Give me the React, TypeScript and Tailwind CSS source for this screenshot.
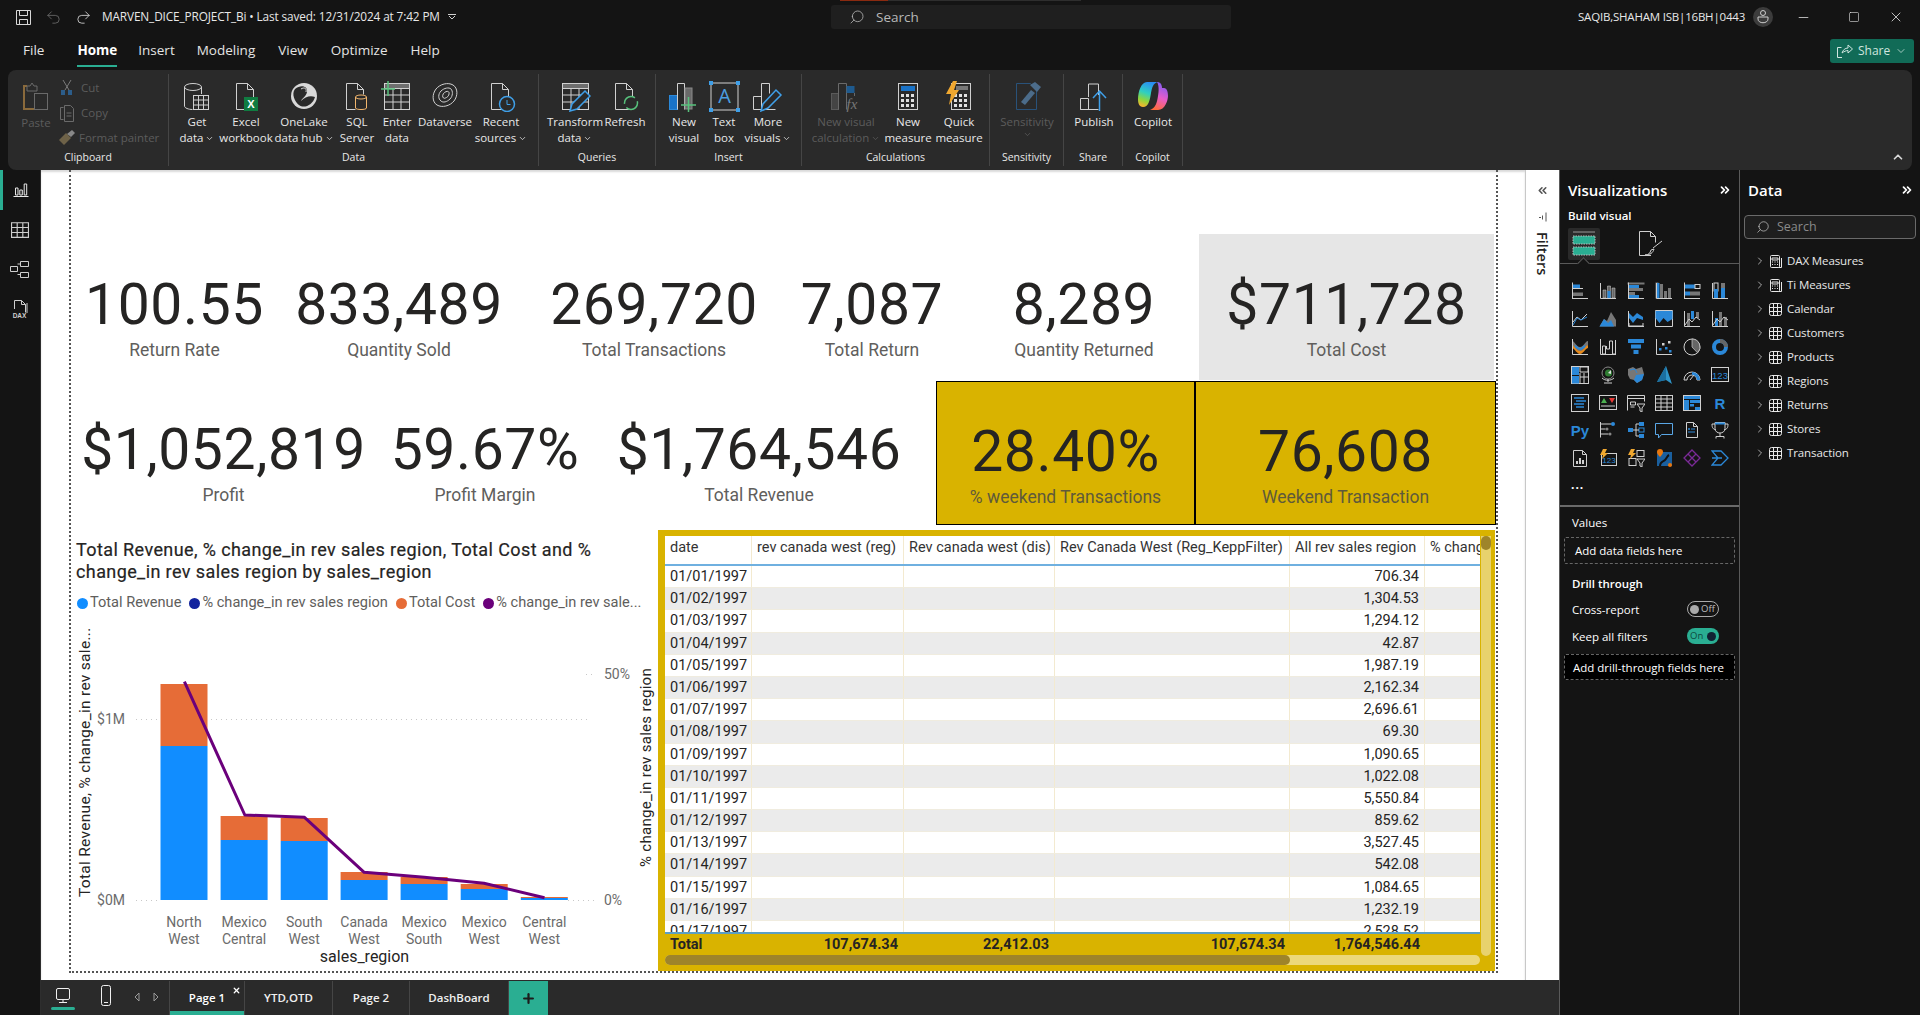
import { ReactNode } from "react";
import { ChevronDown, ChevronRight, ChevronsLeft, ChevronsRight, ChevronUp, Minus, Plus, Redo2, Search, Square, Undo2, X } from "lucide-react";

const G = "#d0d0d0";
const B = "#2b88d8";

function Ico({ children, w = 32, h = 32, className = "" }: { children: ReactNode; w?: number; h?: number; className?: string }) {
  return (
    <svg width={w} height={h} viewBox={`0 0 ${w} ${h}`} fill="none" stroke={G} strokeWidth="1" className={className}>
      {children}
    </svg>
  );
}

const doc = <path d="M6.5 3.5h11l6 6v20h-17z M17.5 3.5v6h6" />;
const calcKeys = (x: number, y: number) =>
  [0, 1, 2].flatMap((r) => [0, 1, 2].map((c) => <rect key={`${r}${c}`} x={x + c * 5} y={y + r * 5} width="3" height="3" fill="#e0e0e0" stroke="none" />));

// ribbon icons
const ribbonIcons: Record<string, ReactNode> = {
  paste: (
    <Ico>
      <path d="M7 6h-3v23h11" stroke="#8a6a3c" strokeWidth="2" />
      <path d="M7 6h3l2-3 2 3h3v5h-10z" stroke="#6a6a6a" />
      <rect x="14.500" y="13.500" width="13" height="16" stroke="#6a6a6a" />
    </Ico>
  ),
  getData: (
    <Ico>
      <ellipse cx="12" cy="7" rx="8.500" ry="3.500" />
      <path d="M3.500 7v19c0 2 4 3.500 8 3.500M20.500 7v7" />
      <rect x="12.500" y="15.500" width="15" height="14" fill="#2a2a2a" />
      <path d="M12.500 20h15M12.500 25h15M17.500 15.500v14M22.500 15.500v14" />
    </Ico>
  ),
  excel: (
    <Ico>
      {doc}
      <rect x="14" y="17" width="14" height="14" fill="#107c41" stroke="none" />
      <text x="21" y="28" fontSize="11" fontWeight="700" fill="#fff" stroke="none" textAnchor="middle" fontFamily="Liberation Sans">X</text>
    </Ico>
  ),
  onelake: (
    <Ico>
      <circle cx="16" cy="16" r="13" fill="#d8d8d8" stroke="none" />
      <path d="M7 9c6-5 13-3 12 3-1 5-5 6-6 9 4-4 9-6 14-4-2 8-11 12-16 8-4-3-8-11-4-16z" fill="#2a2a2a" stroke="none" />
      <path d="M13 9c3-2 6-1 5 3" stroke="#d8d8d8" />
    </Ico>
  ),
  sql: (
    <Ico>
      <path d="M5.500 3.500h11l6 6v5M16.500 3.500v6h6M5.500 3.500v26h9" />
      <ellipse cx="20" cy="17" rx="5.500" ry="2" stroke="#f2b66d" />
      <path d="M14.500 17v11c0 2 11 2 11 0v-11" stroke="#f2b66d" />
    </Ico>
  ),
  enter: (
    <Ico>
      <rect x="3.500" y="3.500" width="25" height="26" />
      <rect x="3.500" y="3.500" width="25" height="5" fill="#6e6e6e" />
      <path d="M3.500 15h25M3.500 22h25M12 8v21M20 8v21" />
      <path d="M0 9h14M7 1v15" stroke="#58c27d" strokeWidth="1.500" />
    </Ico>
  ),
  dataverse: (
    <Ico>
      <path d="M8 25c-5-3-5-11-1-16s12-7 17-4 5 11 1 16-12 7-17 4z" />
      <path d="M12 21c-3-2-3-7 0-10s8-4 10-2 2 7-1 10-7 4-9 2z" />
      <path d="M14.500 18c-1.500-1-1-4 1-5.500s4-1.500 4.500 0-.5 4-2.500 5-2.500 1-3 .5z" />
    </Ico>
  ),
  recent: (
    <Ico>
      {doc}
      <circle cx="22" cy="24" r="7.500" fill="#2a2a2a" stroke="#3f9fe8" strokeWidth="1.500" />
      <path d="M22 20v4.500h3.500" stroke="#3f9fe8" />
    </Ico>
  ),
  transform: (
    <Ico>
      <rect x="3.500" y="3.500" width="26" height="26" />
      <rect x="3.500" y="3.500" width="26" height="5" fill="#6e6e6e" />
      <path d="M3.500 15h26M3.500 22h26M12 8v21M20 8v21" />
      <path d="M11 31l2-7 13-13 5 5-13 13z" fill="#2a2a2a" stroke="#3f9fe8" strokeWidth="1.500" />
    </Ico>
  ),
  refresh: (
    <Ico>
      {doc}
      <circle cx="22" cy="23" r="6.500" fill="#2a2a2a" stroke="#58c27d" strokeWidth="1.500" strokeDasharray="15 4" />
    </Ico>
  ),
  newVisual: (
    <Ico>
      <rect x="1.500" y="15.500" width="8" height="14" fill="#1a73c7" stroke={B} />
      <path d="M9.500 29.500v-26h7v26" />
      <rect x="17" y="8" width="7" height="21" fill="#6a6a6a" stroke="#8a8a8a" />
      <path d="M13 25h15M20.500 17v15" stroke="#58c27d" strokeWidth="1.500" />
    </Ico>
  ),
  textBox: (
    <Ico>
      <rect x="3" y="3" width="27" height="27" />
      <text x="16.500" y="23" fontSize="20" fill="#4a9fe0" stroke="none" textAnchor="middle" fontFamily="Open Sans">A</text>
      {[[1, 1], [28, 1], [1, 28], [28, 28]].map(([x, y]) => (
        <rect key={`${x}${y}`} x={x} y={y} width="4" height="4" fill="#3f9fe8" stroke="none" />
      ))}
    </Ico>
  ),
  moreVisuals: (
    <Ico>
      <path d="M1.500 29.500v-13h8M9.500 29.500v-26h8v10M1.500 29.500h22" />
      <path d="M9 31l2-7 13-14 5 5-13 13z" fill="#2a2a2a" stroke="#3f9fe8" strokeWidth="1.500" />
    </Ico>
  ),
  visualCalc: (
    <Ico>
      <rect x="1.500" y="13.500" width="7" height="16" fill="#444" stroke="#5a5a5a" />
      <path d="M8.500 29.500v-26h8v26" stroke="#6a6a6a" />
      <rect x="16.500" y="6" width="8" height="7" fill="#1e5a8e" stroke="none" />
      <path d="M16.500 13v6M24.500 13v3" stroke="#6a6a6a" />
      <text x="22" y="29" fontSize="15" fontStyle="italic" fill="#777" stroke="none" textAnchor="middle" fontFamily="Liberation Serif">fx</text>
    </Ico>
  ),
  measure: (
    <Ico>
      <rect x="6.500" y="3.500" width="19" height="26" />
      <rect x="9" y="6" width="14" height="5" fill="#1a73c7" stroke="none" />
      {calcKeys(9, 14)}
    </Ico>
  ),
  quick: (
    <Ico>
      <rect x="8.500" y="3.500" width="19" height="26" />
      <rect x="13" y="6" width="12" height="4" fill="#777" stroke="none" />
      {calcKeys(11, 14)}
      <path d="M10 1l4 0-3 9h5L6 25l2-11H3z" fill="#f0a830" stroke="none" />
    </Ico>
  ),
  sens: (
    <Ico>
      <path d="M5.500 3.500h14l6 6v20h-20z" stroke="#29527a" />
      <path d="M10 22l10-12 4 3-10 12z" fill="#4c6c8a" stroke="none" />
      <path d="M19 5l5-3 6 5-4 5z" fill="#4c6c8a" stroke="none" />
    </Ico>
  ),
  publish: (
    <Ico>
      <path d="M2.500 29.500v-11h8v11zM10.500 17v-13h10v11M2.500 29.500h18" />
      <path d="M21.500 31v-20M15 18l6.500-7 6.500 7" stroke="#3f9fe8" strokeWidth="1.500" />
    </Ico>
  ),
  copilot: (
    <svg width="32" height="32" viewBox="0 0 32 32">
      <defs>
        <linearGradient id="cpa" x1="0.600" y1="0" x2="0.300" y2="1">
          <stop offset="0" stopColor="#2a8cf5" />
          <stop offset="0.45" stopColor="#2fd0c0" />
          <stop offset="0.75" stopColor="#8fd63c" />
          <stop offset="1" stopColor="#f5b52e" />
        </linearGradient>
        <linearGradient id="cpb" x1="0.700" y1="0" x2="0.400" y2="1">
          <stop offset="0" stopColor="#7b5cf5" />
          <stop offset="0.55" stopColor="#e85cc8" />
          <stop offset="1" stopColor="#ff6a3c" />
        </linearGradient>
      </defs>
      <path d="M20 2c3 0 5 2 5 6h2c3 0 4 4 4 8s-3 14-10 14h-8c6-2 7-8 8-14 1-5 1-11-1-14z" fill="url(#cpb)" />
      <path d="M10 2h11c-5 1-6 6-7 11-1 6-2 14-8 14-4 0-5-4-5-8 0-7 3-17 9-17z" fill="url(#cpa)" />
    </svg>
  ),
};

type Btn = { w: string; icon: string; l1: string; l2?: string; caret?: boolean; off?: boolean };
type Group = { w: string; label: string; pad: string; items: Btn[] };

const groups: Group[] = [
  {
    w: "w-[370px]", label: "Data", pad: "pl-[3px]",
    items: [
      { w: "w-[50px]", icon: "getData", l1: "Get", l2: "data", caret: true },
      { w: "w-[48px]", icon: "excel", l1: "Excel", l2: "workbook" },
      { w: "w-[68px]", icon: "onelake", l1: "OneLake", l2: "data hub", caret: true },
      { w: "w-[38px]", icon: "sql", l1: "SQL", l2: "Server" },
      { w: "w-[42px]", icon: "enter", l1: "Enter", l2: "data" },
      { w: "w-[54px]", icon: "dataverse", l1: "Dataverse" },
      { w: "w-[58px]", icon: "recent", l1: "Recent", l2: "sources", caret: true },
    ],
  },
  {
    w: "w-[117px]", label: "Queries", pad: "pl-[7px]",
    items: [
      { w: "w-[58px]", icon: "transform", l1: "Transform", l2: "data", caret: true },
      { w: "w-[42px]", icon: "refresh", l1: "Refresh" },
    ],
  },
  {
    w: "w-[146px]", label: "Insert", pad: "pl-[7px]",
    items: [
      { w: "w-[42px]", icon: "newVisual", l1: "New", l2: "visual" },
      { w: "w-[38px]", icon: "textBox", l1: "Text", l2: "box" },
      { w: "w-[50px]", icon: "moreVisuals", l1: "More", l2: "visuals", caret: true },
    ],
  },
  {
    w: "w-[188px]", label: "Calculations", pad: "pl-[10px]",
    items: [
      { w: "w-[68px]", icon: "visualCalc", l1: "New visual", l2: "calculation", caret: true, off: true },
      { w: "w-[56px]", icon: "measure", l1: "New", l2: "measure" },
      { w: "w-[46px]", icon: "quick", l1: "Quick", l2: "measure" },
    ],
  },
  {
    w: "w-[74px]", label: "Sensitivity", pad: "pl-[7px]",
    items: [{ w: "w-[60px]", icon: "sens", l1: "Sensitivity", l2: "", caret: true, off: true }],
  },
  { w: "w-[59px]", label: "Share", pad: "pl-[7px]", items: [{ w: "w-[46px]", icon: "publish", l1: "Publish" }] },
  { w: "w-[60px]", label: "Copilot", pad: "pl-[7px]", items: [{ w: "w-[46px]", icon: "copilot", l1: "Copilot" }] },
];

function RibbonButton({ b }: { b: Btn }) {
  return (
    <div className={`${b.w} flex shrink-0 flex-col items-center pt-[5px]`}>
      <div className="flex h-[34px] items-center justify-center">{ribbonIcons[b.icon]}</div>
      <div className={`mt-[1px] whitespace-nowrap text-center text-[11.5px] leading-[16px] ${b.off ? "text-[#5c5c5c]" : "text-[#e8e8e8]"}`}>
        <div>{b.l1}</div>
        <div className="flex items-center justify-center gap-[2px]">
          {b.l2}
          {b.caret && <ChevronDown size={9} strokeWidth={2} />}
        </div>
      </div>
    </div>
  );
}

function Ribbon() {
  return (
    <div className="mx-[8px] flex h-[100px] w-[1904px] items-start rounded-lg bg-[#2a2a2a] pt-[4px]">
      {/* clipboard is laid out differently */}
      <div className="flex h-[92px] w-[161px] shrink-0 flex-col border-r border-[#454545]">
        <div className="flex h-[76px]">
          <div className="flex w-[46px] flex-col items-center pl-[10px] pt-[6px]">
            {ribbonIcons.paste}
            <div className="mt-[2px] text-[11.5px] text-[#5c5c5c]">Paste</div>
          </div>
          <div className="flex flex-col gap-[6px] pl-[4px] pt-[4px] text-[11.5px] leading-[19px] text-[#5c5c5c]">
            <div className="flex items-center gap-[5px]">
              <svg width="18" height="18" viewBox="0 0 18 18" fill="none" stroke="#7a7a7a"><path d="M5 1l6 10M13 1L7 11" /><rect x="3" y="11" width="4" height="5" fill="#2c5d8a" stroke="none" /><rect x="10" y="11" width="4" height="5" fill="#2c5d8a" stroke="none" /></svg>
              Cut
            </div>
            <div className="flex items-center gap-[5px]">
              <svg width="18" height="18" viewBox="0 0 18 18" fill="none" stroke="#6a6a6a"><path d="M5.500 3.500h-3v12h3M6.500 1.500h6l3 3v13h-9zM8.500 9h5M8.500 12h5" /></svg>
              Copy
            </div>
            <div className="flex items-center gap-[3px]">
              <svg width="18" height="18" viewBox="0 0 18 18" fill="none"><path d="M1 11l7-7 5 5-7 7z" fill="#6e6248" /><path d="M9 5l5-4 3 3-4 4" fill="#888" /></svg>
              Format painter
            </div>
          </div>
        </div>
        <div className="text-center text-[10.5px] text-[#e8e8e8]">Clipboard</div>
      </div>
      {groups.map((g) => (
        <div key={g.label} className={`${g.w} flex h-[92px] shrink-0 flex-col border-r border-[#454545]`}>
          <div className={`flex h-[76px] ${g.pad}`}>
            {g.items.map((b) => (
              <RibbonButton key={b.l1 + b.icon} b={b} />
            ))}
          </div>
          <div className="text-center text-[10.5px] text-[#e8e8e8]">{g.label}</div>
        </div>
      ))}
      <div className="flex h-[92px] flex-1 items-end justify-end pr-[7px]">
        <ChevronUp size={14} strokeWidth={3} className="mb-[2px] text-[#d8d8d8]" />
      </div>
    </div>
  );
}

function TitleBar() {
  return (
    <div className="flex h-[34px] items-center text-[#e8e8e8]">
      <div className="flex w-[102px] shrink-0 items-center gap-[13px] pl-[15px]">
        <svg width="17" height="17" viewBox="0 0 17 17" fill="none" stroke="#d8d8d8"><path d="M1.500 1.500h14v14h-14zM4.500 1.500v5h8v-5M4.500 15.500v-5h8v5" /></svg>
        <Undo2 size={17} strokeWidth={1.2} className="text-[#6c6c6c]" />
        <Redo2 size={17} strokeWidth={1.2} className="text-[#d8d8d8]" />
      </div>
      <div className="w-[345px] shrink-0 whitespace-nowrap text-[11.8px] tracking-[-0.12px]">MARVEN_DICE_PROJECT_Bi • Last saved: 12/31/2024 at 7:42 PM</div>
      <svg width="10" height="8" viewBox="0 0 10 8" fill="none" stroke="#cfcfcf"><path d="M1 1.500h8M2 3l3 3 3-3" /></svg>
      <div className="ml-[374px] flex h-[24px] w-[400px] items-center rounded-[3px] bg-[#1f1f1f] pl-[18px] text-[13.500px] text-[#b8b8b8]">
        <Search size={16} strokeWidth={1.2} className="mr-[11px] -scale-x-100" />
        Search
      </div>
      <div className="ml-[347px] w-[175px] whitespace-nowrap text-[11.5px] tracking-[-0.2px]">SAQIB,SHAHAM ISB|16BH|0443</div>
      <div className="flex h-[20px] w-[20px] items-center justify-center rounded-full bg-[#3c3c3c]">
        <svg width="12" height="16" viewBox="0 0 12 16" fill="none" stroke="#cfcfcf"><circle cx="6" cy="4" r="2.500" /><path d="M1 8h10v2c0 5-10 5-10 0z" /></svg>
      </div>
      <Minus size={15} strokeWidth={1.2} className="ml-[23px]" />
      <Square size={12} strokeWidth={1.2} className="ml-[37px]" />
      <X size={16} strokeWidth={1.2} className="ml-[28px]" />
    </div>
  );
}

function TabRow() {
  return (
    <div className="relative flex h-[36px] items-center pb-[3px] text-[13.5px] text-[#e4e4e4]">
      <span className="ml-[23px]">File</span>
      <span className="relative ml-[33px] font-bold text-white">
        Home
        <span className="absolute -bottom-[6px] left-0 h-[2px] w-full bg-[#2aae92]" />
      </span>
      <span className="ml-[21px]">Insert</span>
      <span className="ml-[22px]">Modeling</span>
      <span className="ml-[23px]">View</span>
      <span className="ml-[23px]">Optimize</span>
      <span className="ml-[23px]">Help</span>
      <div className="ml-auto mr-[6px] flex h-[24px] w-[84px] items-center gap-[5px] rounded-[3px] bg-[#116b57] pl-[7px] text-[12px] text-[#cfe5df]">
        <svg width="16" height="15" viewBox="0 0 16 15" fill="none" stroke="#cfe5df"><path d="M5 14.500H.5V4.500h4M5 10c1-3 3-5 6-5V2l4.500 4L11 10V7.500c-2 0-4 1-6 2.500z" /></svg>
        Share
        <ChevronDown size={12} strokeWidth={1.5} />
      </div>
    </div>
  );
}

function Rail() {
  return (
    <div className="flex w-[41px] shrink-0 flex-col border-r border-[#2e2e2e] bg-[#141414]">
      <div className="flex h-[40px] items-center border-l-[3px] border-[#2aae92] pl-[10px]">
        <svg width="16" height="16" viewBox="0 0 16 16" fill="none" stroke="#e8e8e8"><path d="M.5 14.500h15M2.500 13V6h2.500v7zM6.800 13V8h2.500v5zM11.200 13V2h2.500v11z" /></svg>
      </div>
      <div className="flex flex-col items-center gap-[20px] pt-[11px] pr-[1px] text-[#cfcfcf]">
        <svg width="18" height="18" viewBox="0 0 16 16" fill="none" stroke="currentColor"><path d="M.5 1.500h15v13H.5zM.5 5.800h15M.5 10.200h15M5.500 1.500v13M10.500 1.500v13" /></svg>
        <svg width="20" height="20" viewBox="0 0 20 20" fill="none" stroke="currentColor"><path d="M10.500 2.500h8v5h-8zM.5 7.500h7v5h-7zM10.500 13.500h8v5h-8zM7.500 5h3M7.500 15.500h3" /></svg>
        <svg width="20" height="20" viewBox="0 0 20 20" fill="none" stroke="currentColor"><path d="M4.500 10V1.500h7l4 4v8M11.500 1.500v4h4M17 4v10" /><text x="9.500" y="18.500" fontSize="6.500" fontWeight="700" fill="currentColor" stroke="none" textAnchor="middle" fontFamily="Liberation Sans">DAX</text></svg>
      </div>
    </div>
  );
}

const Num = "whitespace-nowrap font-['Roboto'] text-[57px] leading-[58px] tracking-[0.6px] text-[#252423]";

function Kpi({ w, value, label, cls = "", lab = "text-[#605e5c]", top = "pt-[42px]" }: { w: string; value: string; label: string; cls?: string; lab?: string; top?: string }) {
  return (
    <div className={`${w} ${cls} ${top} flex h-full shrink-0 flex-col items-center`}>
      <div className={Num}>{value}</div>
      <div className={`mt-[6px] whitespace-nowrap font-['Roboto'] text-[17.5px] leading-[20px] ${lab}`}>{label}</div>
    </div>
  );
}

function Chart() {
  const bars = [
    { x: 160.5, top: 684, split: 746, a: "North", b: "West" },
    { x: 220.6, top: 816, split: 840, a: "Mexico", b: "Central" },
    { x: 280.7, top: 818, split: 841, a: "South", b: "West" },
    { x: 340.6, top: 872, split: 880, a: "Canada", b: "West" },
    { x: 400.6, top: 877, split: 884, a: "Mexico", b: "South" },
    { x: 460.7, top: 884, split: 889, a: "Mexico", b: "West" },
    { x: 520.8, top: 897, split: 898, a: "Central", b: "West" },
  ];
  return (
    <div className="w-[587px] shrink-0 font-['Roboto']">
      <div className="pl-[5px] pt-[9px] text-[18px] leading-[22px] tracking-[0.4px] text-[#252423] [-webkit-text-stroke:0.2px_#252423]">
        Total Revenue, % change_in rev sales region, Total Cost and %<br />change_in rev sales region by sales_region
      </div>
      <div className="mt-[10px] flex h-[20px] items-center whitespace-nowrap pl-[6px] text-[14.6px] text-[#605e5c]">
        <span className="mr-[2px] h-[11px] w-[11px] rounded-full bg-[#118dff]" />
        <span>Total Revenue</span>
        <span className="ml-[8px] mr-[2px] h-[11px] w-[11px] rounded-full bg-[#12239e]" />
        <span>% change_in rev sales region</span>
        <span className="ml-[8px] mr-[2px] h-[11px] w-[11px] rounded-full bg-[#e66c37]" />
        <span>Total Cost</span>
        <span className="ml-[8px] mr-[2px] h-[11px] w-[11px] rounded-full bg-[#6b007b]" />
        <span>% change_in rev sale...</span>
      </div>
      <svg width="587" height="358" viewBox="71 613 587 358" className="block font-['Roboto']">
        <path d="M136 719.500H590M136 900.500H160M586 674.500H594M568 900.500H594" stroke="#c8c8c8" strokeDasharray="1 4" />
        <text x="125" y="724" textAnchor="end" fontSize="14" fill="#6b6b6b">$1M</text>
        <text x="125" y="905" textAnchor="end" fontSize="14" fill="#6b6b6b">$0M</text>
        <text x="604" y="679" fontSize="14" fill="#6b6b6b">50%</text>
        <text x="604" y="905" fontSize="14" fill="#6b6b6b">0%</text>
        {bars.map((b) => (
          <g key={b.x}>
            <rect x={b.x} y={b.top} width="47" height={b.split - b.top} fill="#e66c37" />
            <rect x={b.x} y={b.split} width="47" height={900 - b.split} fill="#118dff" />
            <text x={b.x + 23.5} y="927" textAnchor="middle" fontSize="14" fill="#6b6b6b">{b.a}</text>
            <text x={b.x + 23.5} y="944" textAnchor="middle" fontSize="14" fill="#6b6b6b">{b.b}</text>
          </g>
        ))}
        <polyline points="184.400,681.700 244.800,815 304.500,817.300 364.200,872.300 424.300,877.300 484,883.300 544.500,897.700" fill="none" stroke="#6b007b" strokeWidth="3" strokeLinejoin="round" />
        <text x="364.500" y="962" textAnchor="middle" fontSize="16" fill="#252423">sales_region</text>
        <text transform="translate(90 897) rotate(-90)" fontSize="15.500" fill="#252423" letterSpacing="0.3">Total Revenue, % change_in rev sale...</text>
        <text transform="translate(651 867) rotate(-90)" fontSize="15" fill="#252423" letterSpacing="0.3">% change_in rev sales region</text>
      </svg>
    </div>
  );
}

const rows = [
  ["01/01/1997", "706.34"], ["01/02/1997", "1,304.53"], ["01/03/1997", "1,294.12"], ["01/04/1997", "42.87"], ["01/05/1997", "1,987.19"],
  ["01/06/1997", "2,162.34"], ["01/07/1997", "2,696.61"], ["01/08/1997", "69.30"], ["01/09/1997", "1,090.65"], ["01/10/1997", "1,022.08"],
  ["01/11/1997", "5,550.84"], ["01/12/1997", "859.62"], ["01/13/1997", "3,527.45"], ["01/14/1997", "542.08"], ["01/15/1997", "1,084.65"],
  ["01/16/1997", "1,232.19"], ["01/17/1997", "2,528.52"],
];

const gridCols = "grid grid-cols-[87px_152px_151px_235px_135px_55px]";
const cell = "h-full overflow-hidden whitespace-nowrap border-r border-[#f3ead0] px-[5px]";

function DataTable() {
  return (
    <div className="flex h-[441px] w-[837px] shrink-0 bg-[#d9b300] pl-[7px] pt-[6px] font-['Roboto'] text-[14.5px] text-[#252423]">
      <div className="w-[815px] shrink-0">
        <div className={`${gridCols} h-[30px] items-center border-b-2 border-[#6fb0e0] bg-white leading-[23px] text-[#333]`}>
          <div className={cell}>date</div>
          <div className={cell}>rev canada west (reg)</div>
          <div className={cell}>Rev canada west (dis)</div>
          <div className={cell}>Rev Canada West (Reg_KeppFilter)</div>
          <div className={cell}>All rev sales region</div>
          <div className={`${cell} border-r-0`}>% change</div>
        </div>
        <div className="h-[368px] overflow-hidden border-b-2 border-[#5b9fc4]">
          {rows.map((r, i) => (
            <div key={r[0]} className={`${gridCols} h-[22.200px] border-b border-[#f0ecdf] leading-[21px] ${i % 2 ? "bg-[#ebebeb]" : "bg-white"}`}>
              <div className={cell}>{r[0]}</div>
              <div className={cell} />
              <div className={cell} />
              <div className={cell} />
              <div className={`${cell} text-right`}>{r[1]}</div>
              <div className={`${cell} border-r-0`} />
            </div>
          ))}
        </div>
        <div className={`${gridCols} h-[21px] text-right font-bold leading-[22px]`}>
          <div className="pl-[5px] text-left">Total</div>
          <div className="pr-[6px]">107,674.34</div>
          <div className="pr-[6px]">22,412.03</div>
          <div className="pr-[5px]">107,674.34</div>
          <div className="pr-[5px]">1,764,546.44</div>
        </div>
        <div className="h-[10px] rounded-full bg-[#ecd87a]">
          <div className="h-full w-[625px] rounded-full bg-[#9e842a]" />
        </div>
      </div>
      <div className="ml-[1px] h-[420px] w-[10px] rounded-b-full bg-[#e8d26d]">
        <div className="h-[14px] w-full rounded-full bg-[#9e842a]" />
      </div>
    </div>
  );
}

function Canvas() {
  return (
    <div className="flex h-[810px] w-[1484px] shrink-0 bg-white shadow-[inset_0_2px_2px_rgba(0,0,0,0.15)]">
      <div className="ml-[28px] h-[803px] w-[1429px] border-x-2 border-b-2 border-dotted border-[#555] pt-[64px]">
        <div className="flex h-[146px]">
          <Kpi w="w-[207px]" value="100.55" label="Return Rate" />
          <Kpi w="w-[242px]" value="833,489" label="Quantity Sold" />
          <Kpi w="w-[268px]" value="269,720" label="Total Transactions" />
          <Kpi w="w-[168px]" value="7,087" label="Total Return" />
          <Kpi w="w-[243px]" cls="pl-[13px]" value="8,289" label="Quantity Returned" />
          <Kpi w="w-[295px]" cls="bg-[#e6e6e6]" value="$711,728" label="Total Cost" />
        </div>
        <div className="mt-[1px] flex h-[144px]">
          <Kpi w="w-[305px]" top="pt-[40px]" value="$1,052,819" label="Profit" />
          <Kpi w="w-[218px]" top="pt-[40px]" value="59.67%" label="Profit Margin" />
          <Kpi w="w-[330px]" top="pt-[40px]" value="$1,764,546" label="Total Revenue" />
          <Kpi w="w-[259px]" top="pt-[41px]" cls="ml-[12px] border border-black bg-[#d9b300]" lab="text-[#5f5a3a]" value="28.40%" label="% weekend Transactions" />
          <Kpi w="w-[301px]" top="pt-[41px]" cls="border border-black bg-[#d9b300]" lab="text-[#5f5a3a]" value="76,608" label="Weekend Transaction" />
        </div>
        <div className="mt-[5px] flex">
          <Chart />
          <DataTable />
        </div>
      </div>
    </div>
  );
}

function BottomBar() {
  const tabs = [
    { w: "w-[88px]", t: "YTD,OTD" },
    { w: "w-[77px]", t: "Page 2" },
    { w: "w-[99px]", t: "DashBoard" },
  ];
  return (
    <div className="flex h-[35px] items-stretch bg-[#2a2a2a] pt-[1px] text-[11.5px] font-semibold text-[#f0f0f0]">
      <div className="relative flex w-[42px] items-center justify-center pl-[2px] pb-[4px]">
        <svg width="16" height="16" viewBox="0 0 16 16" fill="none" stroke="#f0f0f0"><rect x="1.500" y=".5" width="13" height="11" rx="1.500" /><path d="M4 14.500h8M8 12v2" /></svg>
        <span className="absolute bottom-[5px] left-[10px] h-[3px] w-[24px] rounded bg-[#2aae92]" />
      </div>
      <div className="flex w-[44px] items-center justify-center pl-[1px] pb-[4px]">
        <svg width="12" height="22" viewBox="0 0 12 22" fill="none" stroke="#f0f0f0"><rect x="1.500" y=".5" width="9" height="20" rx="2" /><path d="M4 17.500h4" /></svg>
      </div>
      <div className="flex w-[42px] items-center gap-[13px] pl-[7px] pb-[2px] text-[#9a9a9a]">
        <svg width="6" height="10" viewBox="0 0 6 10" fill="none" stroke="currentColor"><path d="M5 1L1 5l4 4z" /></svg>
        <svg width="6" height="10" viewBox="0 0 6 10" fill="none" stroke="currentColor"><path d="M1 1l4 4-4 4z" /></svg>
      </div>
      <div className="relative flex w-[76px] items-center justify-center border-x border-[#454545] text-white">
        Page 1
        <X size={9} strokeWidth={3.5} className="absolute right-[3px] top-[5px]" />
        <span className="absolute bottom-0 left-0 h-[4px] w-full bg-[#2aae92]" />
      </div>
      {tabs.map((t) => (
        <div key={t.t} className={`${t.w} flex items-center justify-center border-r border-[#454545]`}>{t.t}</div>
      ))}
      <div className="flex w-[39px] items-center justify-center bg-[#2aae92]">
        <Plus size={15} strokeWidth={3.5} className="text-[#1c1c1c]" />
      </div>
    </div>
  );
}

// 18 x 18 icons of the visualizations gallery
const axes = <path d="M1.500 1v15.500H17" stroke={G} />;
const axesH = <path d="M1.500 .5v16M1 16.500h16" stroke={G} />;
const vizIcons: ReactNode[] = [
  <>{axesH}<rect x="2" y="2.500" width="7" height="4" fill={B} /><path d="M2 10.500h10v3.500H2z" fill="#777" /><path d="M2 6.500h10" stroke={G} /></>,
  <>{axes}<path d="M4 16V8h3v8zM8.500 16V4h3v12zM13 16V6h3v10z" fill="#666" stroke={G} strokeWidth=".5" /><rect x="8.500" y="9" width="3" height="7" fill={B} /></>,
  <><path d="M.5.500h17v2H.5z" fill="#777" /><rect x="2" y="3" width="10" height="3" fill={B} /><rect x="2" y="6" width="14" height="3" fill="#777" /><rect x="2" y="10" width="6" height="3" fill="#777" /><rect x="2" y="13" width="10" height="3" fill={B} />{axesH}</>,
  <><path d="M.5.500h3v16h-3z" fill="#777" /><rect x="1.500" y="1" width="3" height="15" fill={B} /><rect x="5" y="2" width="3" height="14" fill="#777" /><rect x="9" y="9" width="3" height="7" fill="#777" /><rect x="13" y="6" width="3" height="10" fill="#777" />{axes}</>,
  <>{axesH}<rect x="2" y="2.500" width="10" height="4" fill={B} /><rect x="12" y="2.500" width="5" height="4" stroke={G} /><rect x="2" y="9.500" width="5" height="4" fill={B} /><rect x="7" y="9.500" width="10" height="4" fill="#777" /></>,
  <>{axes}<rect x="3" y="1" width="4" height="8" stroke={G} /><rect x="3" y="7" width="4" height="9" fill={B} /><rect x="10" y="1" width="4" height="5" fill="#777" /><rect x="10" y="6" width="4" height="10" fill={B} /></>,
  <>{axes}<path d="M2 12l4-5 4 3 6-6" stroke={G} /><path d="M2 15l4-7 4 2 6-3" stroke={B} /></>,
  <><path d="M.5 16.500L5 9l3 2 4-9 5 8v6.500z" fill="#777" /><path d="M.5 16.500L5 9l4 4 3-3 3 6.500z" fill={B} /></>,
  <>{axes}<path d="M2 3l4 4 4-4 6 4v3l-6-2-4 5-4-5z" fill={B} /><path d="M2 13v3h14v-3" stroke={G} /></>,
  <><path d="M.5.500h17v16H.5z" stroke={G} /><path d="M.5 1H17.500v8l-5 3-4-4-4 5L.5 8z" fill={B} /></>,
  <>{axes}<rect x="4" y="3" width="3" height="13" fill="#777" /><rect x="8" y="1" width="3" height="8" fill={B} /><rect x="13" y="2" width="3" height="6" fill="#777" /><path d="M2 15l4-6 3 3 4-5 4 3" stroke={G} /></>,
  <>{axes}<rect x="4" y="8" width="3" height="8" fill={B} /><rect x="8" y="2" width="3" height="14" fill="#777" /><rect x="13" y="7" width="3" height="9" fill="#777" /><path d="M2 15l4-6 3 3 4-5 4 3" stroke={G} /></>,
  <><path d="M1 3c3 0 4 6 8 6s5-6 8-6v4l-5 6H6L1 7z" fill="#777" /><path d="M1 7c3 1 4 6 8 6s5-5 8-6v3c-3 1-5 6-8 6s-5-5-8-6z" fill="#e88a1a" /><path d="M4 8c2 1 3 3 5 3s3-2 5-3" stroke={B} strokeWidth="2" />{axes}</>,
  <>{axes}<path d="M3.500 16V8h3v8zM7.500 8V11h3V3h3v13h3V2" stroke={G} /></>,
  <><path d="M1 1h16v4H1z" fill={B} /><path d="M4 6.500h10v4H4z" fill={B} /><path d="M6.500 12h5v4h-5z" fill={B} /></>,
  <>{axes}<rect x="4" y="10" width="2.500" height="2.500" fill={B} /><rect x="7" y="5" width="2.500" height="2.500" fill={G} /><rect x="10" y="9" width="2.500" height="2.500" fill={B} /><rect x="13" y="3" width="2.500" height="2.500" fill={G} /><rect x="14" y="12" width="2.500" height="2.500" fill={B} /></>,
  <><circle cx="9" cy="9" r="8" stroke={G} /><path d="M9 1a8 8 0 0 1 5.500 13.800L9 9z" fill="#666" stroke={G} strokeWidth=".7" /></>,
  <><circle cx="9" cy="9" r="6" stroke={B} strokeWidth="4" /><path d="M9 1a8 8 0 0 1 8 8h-4a4 4 0 0 0-4-4z" fill="#666" /></>,
  <><rect x=".5" y=".5" width="17" height="17" stroke={G} /><path d="M1 1h7v8H1zM1 10h7v7.500H1z" fill={B} /><path d="M9 1h8v5H9zM9 7v10M13 7v10M9 11h8" stroke={G} /></>,
  <><circle cx="9" cy="7" r="6" stroke="#888" /><circle cx="9.500" cy="7" r="3.500" fill="#2f7d32" /><path d="M9 7l3-3v4z" fill="#ddd" /><path d="M3 12c3 3 9 3 12 0M9 13v3M5 17h8" stroke={G} /></>,
  <><path d="M1 3l5-2 3 2 6-2 2 7-2 6-5 3-3-3-4-1-2-4z" fill="#777" /><path d="M9 9l8-1-2 6-5 3-3-3z" fill={B} /><path d="M3 4l5-1 2 4" stroke={B} /></>,
  <><path d="M11 0l6 18-6-4-9 2z" fill="#2f95c9" /><path d="M11 0v14l-9 2z" fill="#1b6fa0" /></>,
  <><path d="M1 14a8 8 0 0 1 16 0h-3a5 5 0 0 0-10 0z" fill="none" stroke={G} /><path d="M9 6a8 8 0 0 1 8 8h-3a5 5 0 0 0-5-5z" fill={B} /><path d="M7 14l4-5" stroke={G} /></>,
  <><rect x=".5" y="1.500" width="17" height="14" stroke={G} /><text x="9" y="12.500" fontSize="9.500" fill={B} stroke="none" textAnchor="middle" fontFamily="Liberation Sans">123</text></>,
  <><rect x=".5" y=".5" width="17" height="17" stroke={G} /><path d="M3 4h10M5 7h10M3 10h10M5 13h8" stroke={B} strokeWidth="1.300" /></>,
  <><rect x=".5" y="1.500" width="17" height="14" stroke={G} /><path d="M5 4l3 5H2z" fill="#4caf50" /><path d="M10 4h6l-3 5z" fill="#e53935" /><path d="M2 12h14" stroke={G} /></>,
  <><path d="M.5 16.500V1.500h17v6M.5 4.500h17M3.500 8h5v3h-5zM3.500 13h4" stroke={G} /><path d="M10 10h8l-3 4v4l-2-1v-3z" stroke={G} /></>,
  <><rect x=".5" y="1.500" width="17" height="15" stroke={G} /><path d="M.5 5h17M.5 9h17M.5 13h17M6 1.500v15M12 1.500v15" stroke={G} /></>,
  <><rect x=".5" y="1.500" width="17" height="15" stroke={G} /><path d="M1 2h16v3H1zM1 6h5v10H1zM7 6h10v3H7zM7 10h4v2.500H7zM12 13h5v3h-5z" fill={B} /></>,
  <text x="9" y="15" fontSize="15" fontWeight="700" fill={B} stroke="none" textAnchor="middle" fontFamily="Liberation Sans">R</text>,
  <text x="9" y="15" fontSize="15" fontWeight="700" fill={B} stroke="none" textAnchor="middle" fontFamily="Liberation Sans">Py</text>,
  <><path d="M1.500 1v15.500M1.500 3h11M1.500 8h5M1.500 13h8" stroke={G} /><circle cx="14" cy="3" r="2" fill={B} /><circle cx="8" cy="8" r="1.500" fill="#888" /><circle cx="11" cy="13" r="1.500" fill="#888" /></>,
  <><rect x="1" y="7" width="5" height="4" fill={B} /><rect x="12" y="1" width="5" height="4" fill={B} /><rect x="12" y="7" width="5" height="4" stroke={B} /><rect x="12" y="13" width="5" height="4" fill={B} /><path d="M6 9h6M9 3v12M9 3h3M9 15h3" stroke={G} /></>,
  <path d="M.5 2.500h17v11h-11l-3 3.500v-3.500h-3z" stroke="#5aa7e6" />,
  <><path d="M3.500 1.500h7l4 4v11h-11zM10.500 1.500v4h4" stroke={G} /><circle cx="6" cy="8" r="1" fill={B} /><path d="M8 8h4M5 11h7" stroke={B} /></>,
  <><path d="M4 1.500h10v6c0 6-10 6-10 0zM4 3H1c0 4 1 5 4 6M14 3h3c0 4-1 5-4 6M9 12v3M5 17.500v-2h8v2" stroke={G} /><path d="M4 1.500h10v2H4z" fill={B} /></>,
  <><path d="M2.500 1.500h9l4 4v12h-13zM11.500 1.500v4h4" stroke={G} /><path d="M5 15v-3h2v3zM8 15V9h2v6zM11 15v-4h2v4z" fill={G} /></>,
  <><rect x="2.500" y="4.500" width="15" height="12" stroke={G} /><text x="10" y="14" fontSize="8" fill={B} stroke="none" textAnchor="middle" fontFamily="Liberation Sans">123</text><path d="M4 0h4L6 4h3L3 10l1-4H1z" fill="#f0a830" /></>,
  <><rect x="10" y="1.500" width="7" height="6" stroke={G} /><rect x="2" y="9.500" width="7" height="7" stroke={G} /><path d="M10 10h8l-3 4v4l-2-1v-3z" stroke={G} /><path d="M4 0h4L6 4h3L3 10l1-4H1z" fill="#f0a830" /></>,
  <><path d="M2 3h15v14H2z" fill="#1a5f9e" /><path d="M5 17c0-5 3-4 5-6s2-4 4-5" stroke="#111" strokeWidth="2" /><path d="M5 0a3 3 0 0 1 3 3c0 2-3 5-3 5S2 5 2 3a3 3 0 0 1 3-3z" fill="#e8760c" /><circle cx="15" cy="16" r="2" fill="#e8760c" /></>,
  <><path d="M9 1l8 8-8 8-8-8z" stroke="#7a2a96" strokeWidth="1.300" /><path d="M5 5l8 8M13 5l-8 8" stroke="#7a2a96" strokeWidth="1.300" /></>,
  <path d="M1 2h9l7 7-7 7H1l6-7zM1 9h6M7 9h4" stroke={B} strokeWidth="1.300" />,
];

function VizPane() {
  return (
    <div className="flex w-[181px] shrink-0 flex-col border-x border-[#5a5a5a] bg-[#141414] text-white">
      <div className="flex h-[32px] items-end justify-between pl-[8px] pr-[7px]">
        <span className="text-[15px] font-semibold leading-[24px]">Visualizations</span>
        <ChevronsRight size={14} strokeWidth={3} className="mb-[5px]" />
      </div>
      <div className="pl-[8px] pt-[6px] text-[11.500px] font-semibold leading-[16px]">Build visual</div>
      <div className="relative flex h-[40px] items-start border-b border-[#5a5a5a] pl-[8px] pt-[4px]">
        <div className="flex h-[32px] w-[32px] items-center justify-center rounded-[2px] bg-[#2a2a2a]">
          <svg width="24" height="26" viewBox="0 0 24 26" fill="none"><path d="M1 1h22" stroke="#999" /><rect x="1" y="5" width="22" height="8" fill="#2aae92" stroke="#bbb" strokeDasharray="1.500 1" /><rect x="1" y="16" width="22" height="8" fill="#2aae92" stroke="#bbb" strokeDasharray="1.500 1" /></svg>
        </div>
        <svg width="26" height="26" viewBox="0 0 26 26" fill="none" stroke="#cfcfcf" className="ml-[38px] mt-[3px]"><path d="M13 24.500H1.500V.5h11l5 5v6M12.500.5v5h5" /><path d="M7 24c4 0 5-2 6-5l3-1c-1 4-4 6-9 6zM15 17l9-7" /></svg>
        <span className="absolute -bottom-[5px] left-[19px] h-[9px] w-[9px] rotate-45 border-l border-t border-[#5a5a5a] bg-[#141414]" />
      </div>
      <div className="grid grid-cols-[repeat(6,28px)] pl-[11px] pt-[11px]">
        {vizIcons.map((icon, i) => (
          <div key={i} className="flex h-[27.900px] items-start pt-[7px]">
            <svg width="18" height="18" viewBox="0 0 18 18" fill="none">{icon}</svg>
          </div>
        ))}
        <div className="flex h-[35px] items-start pt-[9px] text-[12px] font-bold leading-none tracking-[1px] text-white">...</div>
      </div>
      <div className="h-[2px] shrink-0 bg-[#6a6a6a]" />
      <div className="px-[4px] pt-[8px] text-[11.500px]">
        <div className="pl-[8px] leading-[16px]">Values</div>
        <div className="mt-[6px] flex h-[27px] items-center rounded-[2px] border border-dashed border-[#666] pl-[10px]">Add data fields here</div>
        <div className="mt-[12px] pl-[8px] font-semibold leading-[16px]">Drill through</div>
        <div className="mt-[9px] flex h-[16px] items-center justify-between pl-[8px] pr-[16px]">
          Cross-report
          <span className="flex h-[16px] w-[32px] items-center gap-[2px] rounded-full border border-[#aaa] pl-[2px] text-[9.500px] text-[#bbb]">
            <span className="h-[9px] w-[9px] rounded-full bg-[#aaa]" />Off
          </span>
        </div>
        <div className="mt-[11px] flex h-[16px] items-center justify-between pl-[8px] pr-[16px]">
          Keep all filters
          <span className="flex h-[16px] w-[32px] items-center justify-between rounded-full bg-[#2aae92] px-[3px] text-[9.500px] text-[#0d4a3e]">
            On<span className="h-[9px] w-[9px] rounded-full bg-[#123]" />
          </span>
        </div>
        <div className="mt-[10px] flex h-[26px] items-center rounded-[2px] border border-dashed border-[#666] bg-black pl-[8px] whitespace-nowrap">Add drill-through fields here</div>
      </div>
    </div>
  );
}

const tables = ["DAX Measures", "Ti Measures", "Calendar", "Customers", "Products", "Regions", "Returns", "Stores", "Transaction"];

function DataPane() {
  return (
    <div className="flex w-[180px] shrink-0 flex-col bg-[#141414] text-white">
      <div className="flex h-[32px] items-end justify-between pl-[8px] pr-[6px]">
        <span className="text-[15px] font-semibold leading-[24px]">Data</span>
        <ChevronsRight size={14} strokeWidth={3} className="mb-[5px]" />
      </div>
      <div className="ml-[4px] mt-[13px] flex h-[24px] w-[172px] items-center gap-[7px] rounded-[4px] border border-[#6a6a6a] bg-[#1e1e1e] pl-[11px] text-[12.500px] text-[#8a8a8a]">
        <Search size={14} strokeWidth={1.2} className="-scale-x-100 text-[#c8c8c8]" />
        Search
      </div>
      <div className="pl-[14px] pt-[10px] text-[11.5px] tracking-[-0.1px] text-[#e8e8e8]">
        {tables.map((t, i) => (
          <div key={t} className="flex h-[24px] items-center">
            <ChevronRight size={12} strokeWidth={1.5} className="text-[#d8d8d8]" />
            <svg width="13" height="13" viewBox="0 0 13 13" fill="none" stroke="#e8e8e8" className="ml-[3px] mr-[5px]">
              {i < 2 ? (
                <path d="M1.500 1.500q0-1 1-1h7q1 0 1 1v10q0 1-1 1h-7q-1 0-1-1zM3 3h6v2H3zM3 7h1M5.500 7h1M8 7h1M3 9.500h1M5.500 9.500h1M8 9.500h1M12.500 3v9.500h-3" />
              ) : (
                <path d="M2.500.5h8q2 0 2 2v8q0 2-2 2h-8q-2 0-2-2v-8q0-2 2-2zM.5 4.500h12M.5 8.500h12M4.500.5v12M8.500.5v12" />
              )}
            </svg>
            {t}
          </div>
        ))}
      </div>
    </div>
  );
}

export default function App() {
  return (
    <div className="relative flex h-[1015px] w-[1920px] flex-col overflow-hidden bg-[#141414] font-['Open_Sans',sans-serif]">
      {/* loading strip over the search box */}
      <div className="absolute left-[840px] top-0 flex h-[1px] w-[241px]">
        <div className="w-[48px] bg-[#8a2a10]" />
        <div className="flex-1 bg-[#2e2e2e]" />
      </div>
      <TitleBar />
      <TabRow />
      <Ribbon />
      <div className="flex h-[845px]">
        <Rail />
        <div className="flex w-[1518px] shrink-0 flex-col">
          <div className="flex">
            <Canvas />
            <div className="flex w-[34px] flex-col items-center border-l border-[#c8c8c8] bg-white pt-[14px] text-[#252423]">
              <ChevronsLeft size={13} strokeWidth={3} className="text-[#555]" />
              <svg width="10" height="10" viewBox="0 0 10 10" stroke="#555" className="mt-[15px]"><path d="M1 5.500h2M4.500 3.500v4M8 .5v9" /></svg>
              <span className="mt-[10px] text-[14.5px] font-semibold [writing-mode:vertical-rl]">Filters</span>
            </div>
          </div>
          <BottomBar />
        </div>
        <VizPane />
        <DataPane />
      </div>
    </div>
  );
}
